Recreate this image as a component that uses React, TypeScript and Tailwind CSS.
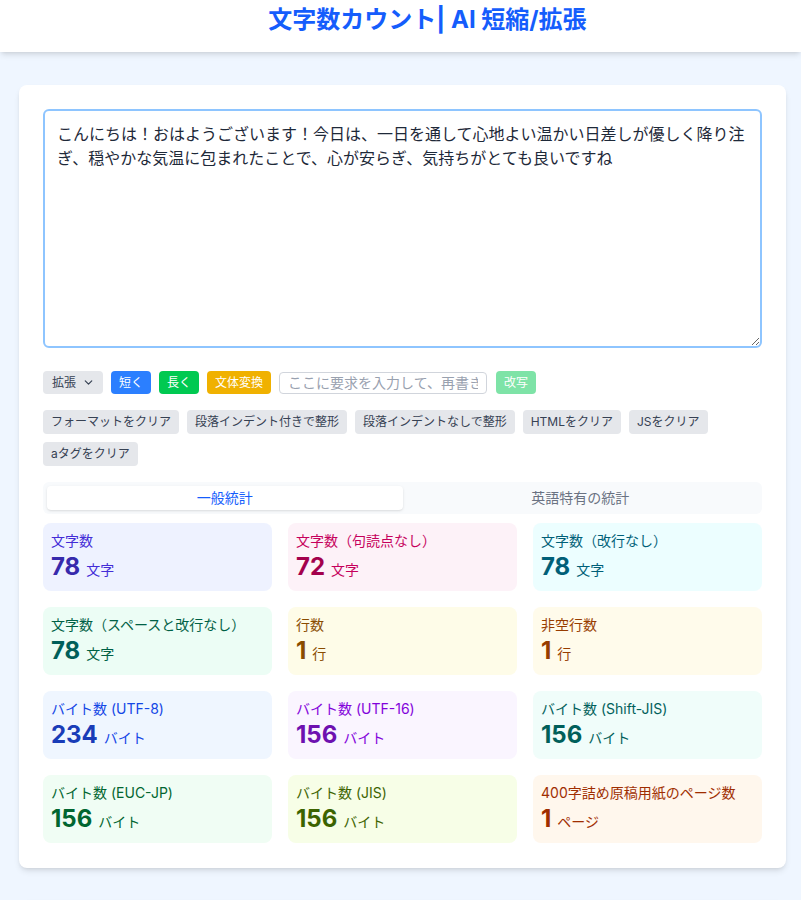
import React from "react";
import { ChevronDown } from "lucide-react";

const stats = [
  { label: "文字数", value: "78", unit: "文字", bg: "bg-indigo-50", lc: "text-indigo-700", nc: "text-indigo-800" },
  { label: "文字数（句読点なし）", value: "72", unit: "文字", bg: "bg-pink-50", lc: "text-pink-700", nc: "text-pink-800" },
  { label: "文字数（改行なし）", value: "78", unit: "文字", bg: "bg-cyan-50", lc: "text-cyan-800", nc: "text-cyan-800" },
  { label: "文字数（スペースと改行なし）", value: "78", unit: "文字", bg: "bg-emerald-50", lc: "text-emerald-800", nc: "text-teal-800" },
  { label: "行数", value: "1", unit: "行", bg: "bg-yellow-50", lc: "text-yellow-800", nc: "text-yellow-800" },
  { label: "非空行数", value: "1", unit: "行", bg: "bg-amber-50", lc: "text-amber-800", nc: "text-amber-800" },
  { label: "バイト数 (UTF-8)", value: "234", unit: "バイト", bg: "bg-blue-50", lc: "text-blue-700", nc: "text-blue-800" },
  { label: "バイト数 (UTF-16)", value: "156", unit: "バイト", bg: "bg-purple-50", lc: "text-purple-700", nc: "text-purple-800" },
  { label: "バイト数 (Shift-JIS)", value: "156", unit: "バイト", bg: "bg-teal-50", lc: "text-teal-800", nc: "text-teal-800" },
  { label: "バイト数 (EUC-JP)", value: "156", unit: "バイト", bg: "bg-green-50", lc: "text-green-800", nc: "text-green-800" },
  { label: "バイト数 (JIS)", value: "156", unit: "バイト", bg: "bg-lime-50", lc: "text-lime-800", nc: "text-lime-800" },
  { label: "400字詰め原稿用紙のページ数", value: "1", unit: "ページ", bg: "bg-orange-50", lc: "text-orange-800", nc: "text-orange-800" },
];

const tools = [
  "フォーマットをクリア",
  "段落インデント付きで整形",
  "段落インデントなしで整形",
  "HTMLをクリア",
  "JSをクリア",
  "aタグをクリア",
];

const text =
  "こんにちは！おはようございます！今日は、一日を通して心地よい温かい日差しが優しく降り注ぎ、穏やかな気温に包まれたことで、心が安らぎ、気持ちがとても良いですね";

export default function App() {
  return (
    <div
      className="min-h-[900px] bg-blue-50 text-gray-800"
      style={{ fontFamily: 'Inter, "Noto Sans CJK JP", sans-serif' }}
    >
      <header className="h-[52px] bg-white shadow-md flex items-start justify-center pl-[54px]">
        <h1 className="text-2xl leading-[40px] font-bold text-blue-600">
          文字数カウント| AI 短縮/拡張
        </h1>
      </header>

      <main className="pl-[19px] pr-[15px] pt-[33px] flex flex-col gap-8">
        <section className="bg-white rounded-lg shadow-md px-6 pt-6 pb-[25px]">
          <textarea
            defaultValue={text}
            className="block w-full h-[239px] border-2 border-blue-300 rounded-md px-3 py-[11px] text-base leading-6 text-gray-800 outline-none resize-y"
          />

          <div className="mt-[23px] flex items-center gap-2">
            <button className="h-[23px] flex items-center gap-1.5 bg-gray-200 text-gray-700 text-xs pl-[9px] pr-2 rounded">
              拡張
              <ChevronDown size={13} strokeWidth={2.2} />
            </button>
            <button className="h-[23px] bg-blue-500 text-white text-xs px-2 rounded">短く</button>
            <button className="h-[23px] bg-green-500 text-white text-xs px-2 rounded">長く</button>
            <button className="h-[23px] bg-yellow-500 text-white text-xs px-2 rounded">文体変換</button>
            <input
              placeholder="ここに要求を入力して、再書きしてください"
              className="w-[208px] h-[22px] border border-gray-300 rounded-sm px-2 text-sm placeholder:text-gray-400 outline-none"
            />
            <button className="ml-[1px] h-[23px] bg-green-500 opacity-50 text-white text-xs px-2 rounded">改写</button>
          </div>

          <div className="mt-4 flex flex-wrap gap-2">
            {tools.map((t) => (
              <button key={t} className="h-6 bg-gray-200 text-gray-700 text-xs px-2 rounded">
                {t}
              </button>
            ))}
          </div>

          <div className="mt-4 bg-slate-50 rounded-md p-1 grid grid-cols-2 text-sm">
            <div className="bg-white shadow-sm rounded-sm text-center text-blue-600 h-6 leading-6">一般統計</div>
            <div className="text-center text-gray-500 h-6 leading-6">英語特有の統計</div>
          </div>

          <div className="mt-[9px] grid grid-cols-3 gap-4">
            {stats.map((s) => (
              <div key={s.label} className={`${s.bg} rounded-lg p-2`}>
                <div className={`text-sm leading-5 ${s.lc}`}>{s.label}</div>
                <div className="flex items-baseline">
                  <span className={`text-2xl leading-8 font-bold ${s.nc}`}>{s.value}</span>
                  <span className={`ml-1.5 text-sm ${s.lc}`}>{s.unit}</span>
                </div>
              </div>
            ))}
          </div>
        </section>
        <section className="bg-white rounded-lg shadow-md h-24" />
      </main>
    </div>
  );
}
